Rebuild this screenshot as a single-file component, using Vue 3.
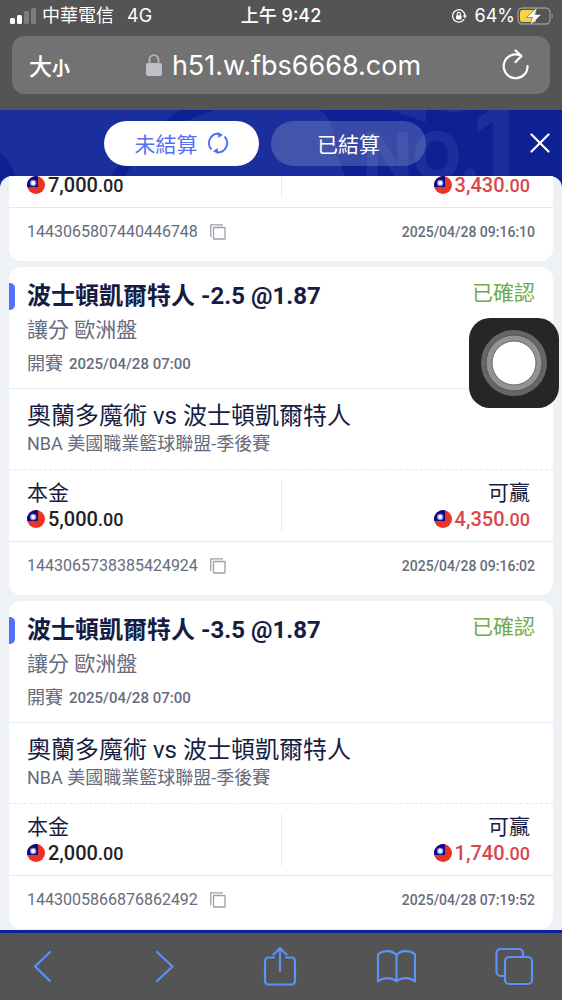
<script setup>
const bets = [
  {
    id: '1443065807440446748',
    stake: '7,000',
    win: '3,430',
    placed: '2025/04/28 09:16:10',
  },
  {
    id: '1443065738385424924',
    pick: '波士頓凱爾特人 -2.5 @1.87',
    stake: '5,000',
    win: '4,350',
    placed: '2025/04/28 09:16:02',
  },
  {
    id: '1443005866876862492',
    pick: '波士頓凱爾特人 -3.5 @1.87',
    stake: '2,000',
    win: '1,740',
    placed: '2025/04/28 07:19:52',
  },
]
</script>

<template>
  <div class="screen">
    <div class="browser-top">
      <div class="status">
        <div class="status-left">
          <svg class="signal" width="26" height="16" viewBox="0 0 26 16" aria-hidden="true">
            <rect x="0" y="10" width="5" height="6" rx="1.5" fill="#fff" />
            <rect x="7" y="7" width="5" height="9" rx="1.5" fill="#fff" />
            <rect x="14" y="3" width="5" height="13" rx="1.5" fill="#7d7d7d" />
            <rect x="21" y="0" width="5" height="16" rx="1.5" fill="#7d7d7d" />
          </svg>
          <span>中華電信</span>
          <span class="network">4G</span>
        </div>
        <div class="clock">上午 9:42</div>
        <div class="status-right">
          <svg width="16" height="16" viewBox="0 0 16 16" fill="none" aria-hidden="true">
            <path d="M12.8 11.6A6.2 6.2 0 1 1 14 8" stroke="#fff" stroke-width="1.3" stroke-linecap="round" />
            <path d="M11.8 7.4h4.2l-2.1 3z" fill="#fff" />
            <rect x="5" y="7.2" width="5.6" height="4.2" rx=".8" fill="#fff" />
            <path d="M6.2 7.4V6a1.6 1.6 0 0 1 3.2 0v1.4" stroke="#fff" stroke-width="1.1" />
          </svg>
          <span>64%</span>
          <svg class="battery" width="37" height="20" viewBox="0 0 37 20" fill="none" aria-hidden="true">
            <rect x="1" y="2" width="32" height="16" rx="4.5" stroke="#969696" stroke-width="1.4" />
            <path d="M34.6 7.5c1.8.6 1.8 4.4 0 5z" fill="#969696" />
            <path d="M5.500 4h13.500v12H5.500A2.500 2.500 0 0 1 3 13.500v-7A2.500 2.500 0 0 1 5.500 4z" fill="#f7d247" />
            <path d="M20.500 1 9.500 11.500h6L13 19.500 24.500 8.500h-6.500z" fill="#fff" stroke="#545454" stroke-width=".6" />
          </svg>
        </div>
      </div>
      <div class="address">
        <button class="text-size" type="button">大<small>小</small></button>
        <div class="url">
          <svg width="16" height="22" viewBox="0 0 16 22" fill="none" aria-hidden="true">
            <rect x="0" y="9" width="16" height="13" rx="2.200" fill="#c0bfc6" />
            <path d="M3.500 10V5.600a4.500 4.500 0 0 1 9 0V10" stroke="#b4b4b8" stroke-width="1.900" />
          </svg>
          <span>h51.w.fbs6668.com</span>
        </div>
        <button class="reload" type="button" aria-label="重新載入">
          <svg width="27" height="32" viewBox="0 0 27 32" fill="none" stroke="#fff" stroke-width="2.200" stroke-linecap="round" stroke-linejoin="round">
            <path d="M25.500 17A11.900 11.900 0 1 1 18.500 6.500" />
            <path d="M13.500 1.500 19.500 7 13.500 13" />
          </svg>
        </button>
      </div>
    </div>

    <header class="tabs">
      <svg class="art" viewBox="0 0 562 66" preserveAspectRatio="xMidYMid slice" aria-hidden="true">
        <rect width="562" height="66" fill="#0d2194" />
        <path d="M0 0H180Q145 22 110 66H15Q12 52 0 42zM215 0H320Q332 8 335 30Q338 50 345 66H125Q150 20 215 0zM390 0H426V12zM440 0H466L455 3z" fill="#1a2f9b" />
        <g fill="#1a2f9b" font-family="Inter, sans-serif" font-weight="800">
          <text x="363" y="69" font-size="64">NO.</text>
          <text x="473" y="66" font-size="94">1</text>
        </g>
      </svg>
      <div class="pills">
        <button class="pill active" type="button">
          未結算
          <svg width="22" height="22" viewBox="0 0 22 22" fill="none" aria-hidden="true">
            <path d="M4.500 17.500A9.300 9.300 0 0 1 12 1.800M9.500 20.200A9.300 9.300 0 0 0 17.500 4.500" stroke="#5570f6" stroke-width="1.900" />
            <path d="M10.500 0 16 2.800 11.500 6zM11.500 22 6 19.200 10.500 16z" fill="#5570f6" />
          </svg>
        </button>
        <button class="pill" type="button">已結算</button>
      </div>
      <button class="close" type="button" aria-label="關閉">
        <svg width="20" height="20" viewBox="0 0 20 20" stroke="#fff" stroke-width="2.200" stroke-linecap="round">
          <path d="M1.500 1.500l17 17M18.500 1.500l-17 17" />
        </svg>
      </button>
    </header>

    <main class="panel">
      <article v-for="bet in bets" :key="bet.id" class="card">
        <section v-if="bet.pick" class="selection">
          <div class="selection-head">
            <h2>{{ bet.pick }}</h2>
            <span class="state">已確認</span>
          </div>
          <p class="market">讓分 歐洲盤</p>
          <p class="start">開賽 <time>2025/04/28 07:00</time></p>
        </section>
        <section v-if="bet.pick" class="match">
          <h3>奧蘭多魔術 vs 波士頓凱爾特人</h3>
          <p>NBA 美國職業籃球聯盟-季後賽</p>
        </section>
        <section class="amounts">
          <div v-for="side in ['stake', 'win']" :key="side" :class="side">
            <p v-if="bet.pick" class="label">{{ side === 'stake' ? '本金' : '可贏' }}</p>
            <p class="money">
              <svg width="18" height="18" viewBox="0 0 18 18" aria-hidden="true">
                <circle cx="9" cy="9" r="9" fill="#ea3323" />
                <path d="M11 .3V11H.3A9 9 0 0 1 11 .3z" fill="#070a8c" />
                <circle cx="6.200" cy="7" r="3.200" fill="#8d90d5" />
                <circle cx="6.200" cy="7" r="2" fill="#fff" />
              </svg>
              <span>{{ bet[side] }}<small>.00</small></span>
            </p>
          </div>
        </section>
        <footer>
          <span class="number">{{ bet.id }}</span>
          <button class="copy" type="button" aria-label="複製">
            <svg width="16" height="16" viewBox="0 0 16 16" fill="none" stroke="#9b9fa8" stroke-width="1.300">
              <rect x="3.500" y="3.500" width="11.500" height="11.500" rx=".5" />
              <path d="M.8 13V.8H13" />
            </svg>
          </button>
          <time>{{ bet.placed }}</time>
        </footer>
      </article>
    </main>

    <nav class="toolbar" aria-label="瀏覽器工具列">
      <button type="button" aria-label="上一頁">
        <svg width="40" height="40" viewBox="0 0 40 40"><path d="M27 5 12 19.500 27 34" /></svg>
      </button>
      <button type="button" aria-label="下一頁">
        <svg width="40" height="40" viewBox="0 0 40 40"><path d="M16 5l15.500 14.500L16 34" /></svg>
      </button>
      <button type="button" aria-label="分享">
        <svg width="40" height="40" viewBox="0 0 40 40">
          <path d="M15 10.500H9.500a3.500 3.500 0 0 0-3.500 3.500V34a3.500 3.500 0 0 0 3.500 3.500h23A3.500 3.500 0 0 0 36 34V14a3.500 3.500 0 0 0-3.500-3.500H27M21 24V1M14.500 7.500 21 1l6.500 6.500" />
        </svg>
      </button>
      <button type="button" aria-label="書籤">
        <svg width="40" height="40" viewBox="0 0 40 40">
          <path d="M20.500 8C16 3 7 3 2 7.500V34.500C7 30 16 30 20.500 34.500C25 30 34 30 39 34.500V7.500C34 3 25 3 20.500 8V34.500" />
        </svg>
      </button>
      <button type="button" aria-label="分頁">
        <svg width="40" height="40" viewBox="0 0 40 40">
          <rect x="11" y="10" width="27" height="27" rx="4" />
          <path d="M11 29H6.500a4 4 0 0 1-4-4V6a4 4 0 0 1 4-4H25a4 4 0 0 1 4 4v4" />
        </svg>
      </button>
    </nav>

    <button class="assist" type="button" aria-label="輔助觸控">
      <svg viewBox="0 0 90 90" aria-hidden="true">
        <circle cx="45" cy="45" r="33" fill="#666" />
        <circle cx="45" cy="45" r="28" fill="#939393" stroke="#555" stroke-width="1" />
        <circle cx="45" cy="45" r="22" fill="#fff" stroke="#666" stroke-width="1" />
      </svg>
    </button>
  </div>
</template>

<style>
body {
  margin: 0;
}
</style>

<style scoped>
.screen {
  height: 100vh;
  display: flex;
  flex-direction: column;
  overflow: hidden;
  position: relative;
  background: #0d2194;
  color: #171c42;
  font-family: Roboto, "Noto Sans CJK TC", sans-serif;
}
button {
  border: 0;
  padding: 0;
  background: none;
  color: inherit;
  font: inherit;
  cursor: pointer;
}
h2,
h3,
p {
  margin: 0;
}
svg {
  display: block;
  flex: none;
}

.browser-top {
  background: #545454;
  color: #fff;
  padding: 0 12px 16px;
  font-family: Inter, "Noto Sans CJK TC", sans-serif;
}
.status {
  height: 32px;
  margin-bottom: 4px;
  display: grid;
  grid-template-columns: 1fr auto 1fr;
  align-items: center;
  font-size: 18px;
  line-height: 24px;
}
.status-left,
.status-right {
  display: flex;
  align-items: center;
  gap: 6px;
}
.signal {
  margin-left: -2px;
}
.network {
  margin-left: 7px;
}
.clock {
  font-weight: 500;
}
.status-right {
  justify-content: flex-end;
  gap: 8px;
}
.battery {
  margin: 0 -4px 0 -6px;
}
.address {
  height: 58px;
  padding: 0 21px 0 17px;
  border-radius: 13px;
  background: #727272;
  display: grid;
  grid-template-columns: 1fr auto 1fr;
  align-items: center;
}
.text-size {
  justify-self: start;
  font-size: 23px;
  font-weight: 500;
}
.text-size small {
  font-size: 18px;
  font-weight: 700;
}
.url {
  display: flex;
  align-items: center;
  gap: 10px;
  margin-left: 9px;
  font-size: 27px;
}
.reload {
  justify-self: end;
}

.tabs {
  height: 66px;
  position: relative;
  display: flex;
  align-items: center;
  padding-right: 12px;
}
.art {
  position: absolute;
  inset: 0;
  width: 100%;
  height: 100%;
}
.pills {
  position: relative;
  display: flex;
  gap: 12px;
  margin: 0 auto;
}
.pill {
  width: 155px;
  height: 45px;
  border-radius: 23px;
  background: rgba(255, 255, 255, 0.18);
  color: #fff;
  display: flex;
  align-items: center;
  justify-content: center;
  gap: 9px;
  font-size: 21px;
}
.pill.active {
  background: #fff;
  color: #5570f6;
}
.close {
  position: relative;
}

.panel {
  flex: 1;
  min-height: 0;
  overflow: hidden;
  padding: 0 9px 1px;
  border-radius: 12px 12px 0 0;
  background: #eef2f6;
  display: flex;
  flex-direction: column;
  justify-content: flex-end;
  gap: 6px;
}
.card {
  flex: none;
  border-radius: 12px;
  background: #fff;
}
.selection {
  padding: 13px 18px 12px;
  border-bottom: 1px solid #e9ebf3;
}
.selection-head {
  position: relative;
  display: flex;
  justify-content: space-between;
  margin-bottom: 4px;
}
.selection-head::before {
  content: "";
  position: absolute;
  left: -18px;
  top: 3px;
  width: 6px;
  height: 27px;
  border-radius: 0 5px 5px 0;
  background: #5270fb;
}
h2 {
  font-size: 24px;
  line-height: 32px;
  font-weight: 700;
}
.state {
  color: #72a94c;
  font-size: 21px;
  line-height: 26px;
}
.market {
  color: #666b7d;
  font-size: 21px;
  line-height: 28px;
  margin-bottom: 8px;
}
.start {
  display: flex;
  gap: 6px;
  color: #666b7d;
  font-size: 18px;
  line-height: 24px;
}
.start time {
  font-size: 15px;
  font-weight: 500;
}
.match {
  padding: 12px 18px;
  border-bottom: 1px dashed #e4e6f0;
}
h3 {
  font-size: 24px;
  line-height: 30px;
  font-weight: 400;
}
.match p {
  color: #666b7d;
  font-size: 18px;
  line-height: 26px;
}
.amounts {
  display: grid;
  grid-template-columns: 1fr 1fr;
  padding: 10px 18px 9px;
  border-bottom: 1px solid #e6e9f0;
}
.win {
  border-left: 1px solid #e9ebf3;
  padding-right: 5px;
  display: flex;
  flex-direction: column;
  align-items: flex-end;
}
.label {
  font-size: 21px;
  line-height: 26px;
}
.money {
  display: flex;
  align-items: center;
  gap: 3px;
  height: 26px;
  color: #222;
  font-size: 20px;
  line-height: 26px;
  font-weight: 500;
}
.win .money {
  color: #d8474b;
}
.money small {
  font-size: 18px;
  line-height: 20px;
}
footer {
  display: flex;
  align-items: center;
  padding: 12px 18px 17px;
  color: #666b7d;
  line-height: 24px;
}
.number {
  font-size: 16px;
}
.copy {
  margin-left: 12px;
}
footer time {
  margin-left: auto;
  font-size: 14px;
  font-weight: 500;
}

.toolbar {
  height: 67px;
  margin-top: 3px;
  padding: 0 28px 0 23px;
  background: #545454;
  display: flex;
  align-items: center;
  justify-content: space-between;
}
.toolbar svg {
  fill: none;
  stroke: #5b92f5;
  stroke-width: 2.2;
  stroke-linecap: round;
  stroke-linejoin: round;
}
.assist {
  position: absolute;
  top: 318px;
  right: 3px;
  width: 90px;
  height: 90px;
  border-radius: 21px;
  background: #262626;
}
</style>
